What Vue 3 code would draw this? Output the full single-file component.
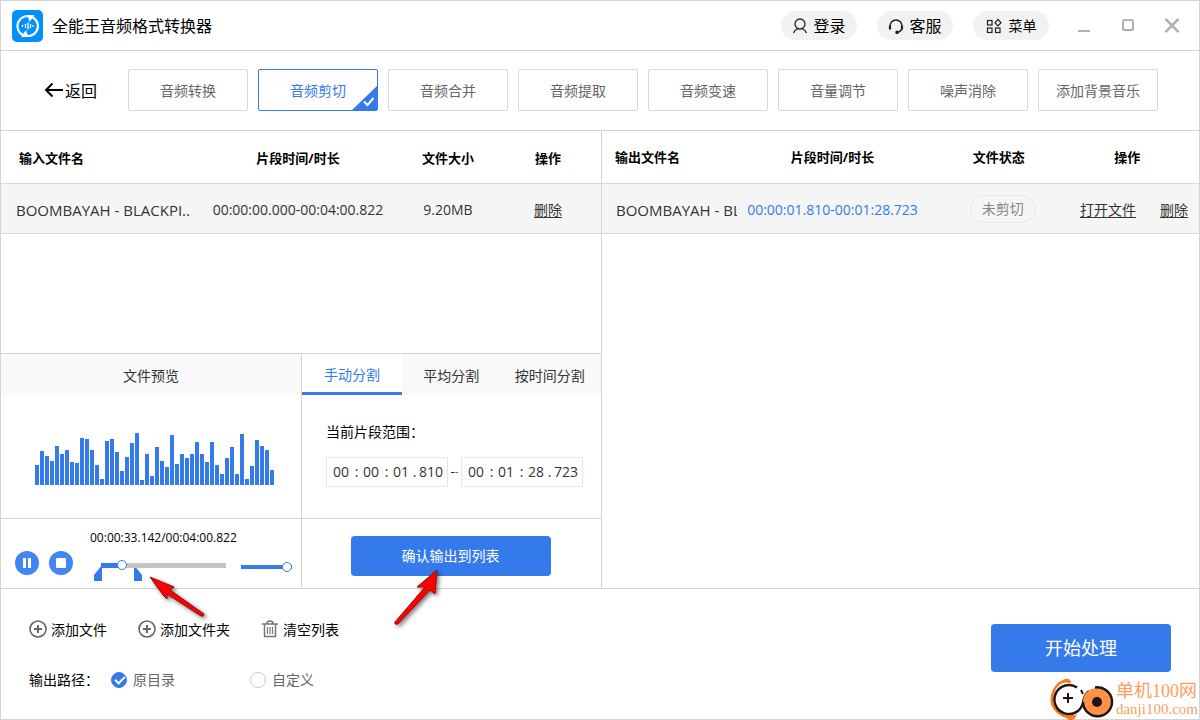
<script setup>
import { ref, computed } from 'vue'

const tools = ['音频转换', '音频剪切', '音频合并', '音频提取', '音频变速', '音量调节', '噪声消除', '添加背景音乐']
const activeTool = ref('音频剪切')

const splitModes = ['手动分割', '平均分割', '按时间分割']
const activeMode = ref('手动分割')

const inputs = [{ name: 'BOOMBAYAH - BLACKPI..', range: '00:00:00.000-00:04:00.822', size: '9.20MB' }]
const outputs = [{ name: 'BOOMBAYAH - BL', range: '00:00:01.810-00:01:28.723', state: '未剪切' }]

const bars = [
  20, 34, 29, 24, 39, 31, 35, 23, 22, 47, 46, 35, 20, 6, 44, 46, 33, 14, 28, 42, 52, 5, 31, 9,
  38, 24, 18, 50, 21, 31, 27, 31, 43, 31, 23, 43, 20, 11, 27, 38, 11, 51, 6, 19, 45, 39, 35, 15,
]

const position = ref(14)
const volume = ref(100)
const played = computed(() => ({ '--fill': position.value + '%' }))
const loudness = computed(() => ({ '--fill': volume.value + '%' }))

const units = ['时', '分', '秒', '毫秒']
const separators = [':', ':', '.']
const start = ref(['00', '00', '01', '810'])
const end = ref(['00', '01', '28', '723'])
const ranges = [
  { label: '开始', parts: start },
  { label: '结束', parts: end },
]

const target = ref('source')
</script>

<template>
  <div class="window">
    <header class="titlebar">
      <svg class="logo" viewBox="0 0 31 32" aria-hidden="true">
        <rect width="31" height="32" rx="5" fill="#0091ff" />
        <g fill="none" stroke="#fff" stroke-width="2.200">
          <path d="M11 25A10 10 0 0 1 8 9.500Q11 6 16 6" />
          <path d="M20.500 7.200A10 10 0 0 1 23.500 22.500Q20.500 26 15.500 26" />
        </g>
        <path d="M14 5L22.500 5L17.500 12L16.500 8.500Z" fill="#fff" />
        <path d="M17.500 27L9 27L14 20L15 23.500Z" fill="#fff" />
        <path d="M10.500 15v2M13.500 14v4M16 12.500v7M18.500 14v4M21 15v2" stroke="#fff" stroke-width="1.300" />
      </svg>
      <h1>全能王音频格式转换器</h1>
      <div class="account">
        <button class="pill" type="button">
          <svg width="16" height="16" viewBox="0 0 16 16" fill="none" stroke="#222" stroke-width="1.300">
            <circle cx="8" cy="6" r="5" />
            <path d="M1.500 15Q2.500 12 6 10.700M14.500 15Q13.500 12 10 10.700" />
          </svg>
          登录
        </button>
        <button class="pill" type="button">
          <svg width="16" height="16" viewBox="0 0 16 16" fill="none" stroke="#222" stroke-width="1.500">
            <path d="M2 10V8a6 6 0 0 1 12 0v2Q13.500 13.500 10 14.200" />
            <path d="M2 7.500v4M14 7.500v4" stroke-width="2.200" />
            <circle cx="9" cy="14.300" r="1" fill="#222" />
          </svg>
          客服
        </button>
        <button class="pill menu" type="button">
          <svg width="16" height="16" viewBox="0 0 16 16" fill="none" stroke="#222" stroke-width="1.200">
            <rect x="1.500" y="2.500" width="4.500" height="4.500" />
            <path d="M12 1.500L15 4.700L12 7.900L9 4.700Z" />
            <rect x="1.500" y="10" width="4.500" height="4.500" />
            <rect x="9.500" y="10" width="4.500" height="4.500" />
          </svg>
          菜单
        </button>
      </div>
      <div class="controls">
        <button type="button" aria-label="最小化">
          <svg width="16" height="16" viewBox="0 0 16 16"><path d="M2 13h12" stroke="#b2b2b2" stroke-width="2" /></svg>
        </button>
        <button type="button" aria-label="最大化">
          <svg width="16" height="16" viewBox="0 0 16 16"><rect x="3" y="2" width="10" height="10" rx="1" fill="none" stroke="#b2b2b2" stroke-width="2" /></svg>
        </button>
        <button type="button" aria-label="关闭">
          <svg width="16" height="16" viewBox="0 0 16 16"><path d="M1.500 1L14.500 14M14.500 1L1.500 14" stroke="#b2b2b2" stroke-width="2.500" /></svg>
        </button>
      </div>
    </header>

    <nav class="toolbar">
      <button class="back" type="button">
        <svg width="20" height="16" viewBox="0 0 20 16" fill="none" stroke="#000" stroke-width="2">
          <path d="M19 7H2M8.500 .5L2 7L8.500 13.500" />
        </svg>
        返回
      </button>
      <div class="tools">
        <button
          v-for="tool in tools"
          :key="tool"
          type="button"
          class="tool"
          :class="{ active: tool === activeTool }"
          @click="activeTool = tool"
        >
          {{ tool }}
          <svg v-if="tool === activeTool" class="corner" width="25" height="24" viewBox="0 0 25 24">
            <path d="M25 0V24H0Z" fill="#347aeb" />
            <path d="M12 15.500L15.500 19L21.500 12" fill="none" stroke="#fff" stroke-width="2" />
          </svg>
        </button>
      </div>
    </nav>

    <main class="workspace">
      <section class="source">
        <div class="list">
          <table class="input-table">
            <thead>
              <tr>
                <th class="name">输入文件名</th>
                <th class="time">片段时间/时长</th>
                <th class="size">文件大小</th>
                <th class="action">操作</th>
              </tr>
            </thead>
            <tbody>
              <tr v-for="file in inputs" :key="file.name">
                <td class="name">{{ file.name }}</td>
                <td>{{ file.range }}</td>
                <td>{{ file.size }}</td>
                <td class="action"><a href="#">删除</a></td>
              </tr>
            </tbody>
          </table>
        </div>

        <div class="editor">
          <div class="preview">
            <h2>文件预览</h2>
            <div class="wave">
              <span v-for="(bar, i) in bars" :key="i" :style="{ height: bar + 'px' }"></span>
            </div>
            <div class="player">
              <button class="round" type="button" aria-label="暂停">
                <svg width="24" height="24" viewBox="0 0 24 24">
                  <circle cx="12" cy="12" r="12" fill="#4285f4" />
                  <path d="M8 7h3v10H8zM13 7h3v10h-3z" fill="#fff" />
                </svg>
              </button>
              <button class="round" type="button" aria-label="停止">
                <svg width="24" height="24" viewBox="0 0 24 24">
                  <circle cx="12" cy="12" r="12" fill="#4285f4" />
                  <rect x="7" y="7" width="10" height="10" rx="1" fill="#fff" />
                </svg>
              </button>
              <div class="progress">
                <output>00:00:33.142/00:04:00.822</output>
                <div class="track">
                  <input v-model="position" class="seek" type="range" min="0" max="100" aria-label="播放进度" :style="played" />
                  <svg class="markers" width="49" height="16" viewBox="0 0 49 16" fill="#347aeb">
                    <path d="M8 0V16H0V10Z" />
                    <path d="M40 0L48 10V16H40Z" />
                  </svg>
                </div>
              </div>
              <input v-model="volume" class="volume" type="range" min="0" max="100" aria-label="音量" :style="loudness" />
            </div>
          </div>

          <div class="split">
            <div class="modes">
              <button
                v-for="mode in splitModes"
                :key="mode"
                type="button"
                :class="{ active: mode === activeMode }"
                @click="activeMode = mode"
              >{{ mode }}</button>
            </div>
            <div class="range">
              <p>当前片段范围：</p>
              <div class="fields">
                <template v-for="(range, r) in ranges" :key="range.label">
                  <span v-if="r" class="dash">-<i>-</i></span>
                  <div class="stamp">
                    <template v-for="(unit, i) in units" :key="unit">
                      <input v-model="range.parts.value[i]" type="text" :class="{ ms: i === 3 }" :aria-label="range.label + unit" />
                      <span v-if="i < 3" :class="{ dot: i === 2 }">{{ separators[i] }}</span>
                    </template>
                  </div>
                </template>
              </div>
            </div>
            <div class="confirm">
              <button class="primary" type="button">确认输出到列表</button>
            </div>
          </div>

          <svg class="pointers" width="300" height="70" viewBox="0 0 300 70" aria-hidden="true">
            <g fill="#f00" stroke="#8a1010" stroke-width="1">
              <path d="M5 13L29 23L25 26L59 50Q59 53 56 52L22 30L22 35L18 31Z" />
              <path d="M292 6L290 30L285 26L253 60Q249 61 250 58L280 23L272 23Z" />
            </g>
          </svg>
        </div>
      </section>

      <section class="result">
        <table class="output-table">
          <thead>
            <tr>
              <th class="name">输出文件名</th>
              <th class="time">片段时间/时长</th>
              <th class="state">文件状态</th>
              <th class="actions">操作</th>
            </tr>
          </thead>
          <tbody>
            <tr v-for="file in outputs" :key="file.name">
              <td class="name">{{ file.name }}</td>
              <td class="clip">{{ file.range }}</td>
              <td class="status"><span class="badge">{{ file.state }}</span></td>
              <td><div class="links"><a href="#">打开文件</a><a href="#">删除</a></div></td>
            </tr>
          </tbody>
        </table>
      </section>
    </main>

    <footer class="bottom">
      <div class="options">
        <div class="adders">
          <button type="button">
            <svg width="20" height="20" viewBox="0 0 20 20" fill="none" stroke="#666">
              <circle cx="10" cy="9" r="8" stroke-width="1.600" />
              <path d="M10 5v8M6 9h8" stroke-width="2" />
            </svg>
            添加文件
          </button>
          <button type="button">
            <svg width="20" height="20" viewBox="0 0 20 20" fill="none" stroke="#666">
              <circle cx="10" cy="9" r="8" stroke-width="1.600" />
              <path d="M10 5v8M6 9h8" stroke-width="2" />
            </svg>
            添加文件夹
          </button>
          <button type="button">
            <svg width="20" height="20" viewBox="0 0 20 20" fill="none" stroke="#777" stroke-width="1.500">
              <path d="M2 4h16M7 3.500Q7 1 10 1Q13 1 13 3.500M4.500 4v12.500h11V4" />
              <path d="M7.500 7v7M10 7v7M12.500 7v7" stroke-width="1.200" />
            </svg>
            清空列表
          </button>
        </div>
        <div class="paths" role="radiogroup" aria-label="输出路径">
          <span class="caption">输出路径：</span>
          <label><input v-model="target" type="radio" name="target" value="source" />原目录</label>
          <label><input v-model="target" type="radio" name="target" value="custom" />自定义</label>
        </div>
      </div>
      <button class="primary start" type="button">开始处理</button>
    </footer>

    <div class="site">
      <svg width="64" height="42" viewBox="0 0 64 42" fill="none">
        <path d="M20 4Q10 1 4 12Q-2 26 8 34Q14 40 24 38" stroke="#ff7519" stroke-width="2.500" />
        <path d="M12 3Q16-1 20 2L22 5Q17 3 12 3ZM15 39Q22 39 27 36Q25 43 19 42Z" fill="#ff7519" />
        <path d="M27 9.500A14.500 14.500 0 1 0 33 25Q34 17 39 13" stroke="#201512" stroke-width="2.500" />
        <path d="M13 20h10M18 15v10M31 12L33 16" stroke="#201512" stroke-width="2" />
        <circle cx="47" cy="24" r="14" fill="#ff9147" />
        <path d="M45 9.500A14.500 14.500 0 1 1 33 24" stroke="#201512" stroke-width="2.500" />
        <circle cx="47" cy="24" r="5" fill="#201512" />
      </svg>
      <div class="site-name"><span>单机100网</span><small>danji100.com</small></div>
    </div>
  </div>
</template>

<style>
body {
  margin: 0;
}
</style>

<style scoped>
* {
  box-sizing: border-box;
}
.window {
  position: relative;
  display: flex;
  flex-direction: column;
  min-height: 100vh;
  border: 1px solid #d4d4d4;
  background: #fff;
  color: #000;
  font: 14px/20px "Open Sans", "Noto Sans CJK SC", sans-serif;
}
button,
input {
  margin: 0;
  padding: 0;
  border: 0;
  background: none;
  color: inherit;
  font: inherit;
}
button {
  cursor: pointer;
}
svg {
  display: block;
  flex: none;
}
h1,
h2,
p {
  margin: 0;
  font-weight: 400;
}
.titlebar {
  display: flex;
  align-items: center;
  height: 50px;
  padding: 0 19px 0 11px;
  border-bottom: 1px solid #d4d4d4;
}
.logo {
  width: 31px;
  height: 32px;
}
h1 {
  margin-left: 9px;
  font-size: 16px;
}
.account {
  display: flex;
  gap: 20px;
  margin-left: auto;
}
.pill {
  display: flex;
  align-items: center;
  justify-content: center;
  gap: 5px;
  width: 76px;
  height: 29px;
  border-radius: 15px;
  background: #f2f2f2;
  font-size: 16px;
}
.pill.menu {
  gap: 7px;
  font-size: 14px;
}
.controls {
  display: flex;
  gap: 28px;
  margin-left: 27px;
}
.toolbar {
  display: flex;
  align-items: center;
  height: 80px;
  padding: 0 41px 2px 43px;
  border-bottom: 1px solid #d4d4d4;
}
.back {
  display: flex;
  align-items: center;
  gap: 1px;
  width: 84px;
  padding-top: 3px;
  font-size: 16px;
}
.tools {
  display: flex;
  flex: 1;
  gap: 10px;
}
.tool {
  position: relative;
  flex: 1;
  height: 42px;
  padding-top: 2px;
  border: 1px solid #d9d9d9;
  border-radius: 2px;
  color: #666;
}
.tool.active {
  border-color: #347aeb;
  color: #347aeb;
}
.corner {
  position: absolute;
  right: 0;
  bottom: 0;
}
.workspace {
  display: grid;
  flex: 1;
  grid-template-columns: minmax(0, 601fr) minmax(0, 597fr);
  border-bottom: 1px solid #d4d4d4;
}
.source {
  display: flex;
  flex-direction: column;
  border-right: 1px solid #d4d4d4;
}
.list {
  flex: 1;
}
table {
  width: 100%;
  border-collapse: separate;
  border-spacing: 0;
  table-layout: fixed;
}
th,
td {
  padding: 0;
  border-bottom: 1px solid #d9d9d9;
  text-align: center;
  white-space: nowrap;
}
th {
  height: 53px;
  font-size: 13px;
  font-weight: 700;
}
.input-table th {
  padding-top: 2px;
}
td {
  height: 50px;
  padding-top: 3px;
  background: #f5f5f5;
  color: #333;
}
td.status {
  padding-top: 0;
}
th.name {
  padding-left: 18px;
  text-align: left;
}
td.name {
  padding-left: 15px;
  overflow: hidden;
  font-size: 15px;
  text-align: left;
}
.input-table .name {
  width: 33%;
}
.input-table .time {
  width: 33%;
}
.input-table .size {
  width: 17%;
}
.input-table .action {
  padding-right: 4px;
}
.output-table .name {
  width: 135px;
}
.output-table th.name {
  padding-left: 13px;
}
.output-table td.name {
  padding-left: 14px;
}
.output-table .time {
  width: 32%;
}
.output-table .state {
  width: 25%;
  padding-right: 8px;
}
.output-table .actions {
  padding-right: 22px;
}
td a {
  color: #333;
  text-underline-offset: 2px;
}
td.clip {
  color: #347aeb;
}
.badge {
  display: inline-block;
  width: 66px;
  border: 1px solid #e8e8e8;
  border-radius: 14px;
  color: #888;
  line-height: 26px;
}
.links {
  display: flex;
  justify-content: flex-end;
  gap: 24px;
  padding-right: 11px;
}
.editor {
  position: relative;
  display: grid;
  grid-template-columns: minmax(0, 301fr) minmax(0, 299fr);
  border-top: 1px solid #d4d4d4;
}
.preview,
.split {
  display: grid;
  grid-template-rows: 41px 124px 69px;
  grid-template-columns: minmax(0, 1fr);
}
.preview {
  border-right: 1px solid #d4d4d4;
}
h2 {
  background: #f9f9f9;
  color: #333;
  font-size: 14px;
  line-height: 43px;
  text-align: center;
}
.wave {
  display: flex;
  align-items: flex-end;
  gap: 1px;
  padding: 0 0 33px 34px;
  border-bottom: 1px solid #d4d4d4;
}
.wave span {
  width: 4px;
  background: #347aeb;
}
.player {
  display: flex;
  align-items: flex-start;
  padding: 0 9px 0 14px;
}
.round {
  flex: none;
  margin: 32px 10px 0 0;
}
.progress {
  flex: 1;
  min-width: 0;
  margin: 9px 15px 0 7px;
}
output {
  display: block;
  font-size: 12px;
  white-space: nowrap;
}
.track {
  position: relative;
  height: 30px;
  margin-left: 11px;
  padding-top: 11px;
}
.markers {
  position: absolute;
  top: 17px;
  left: -7px;
}
input[type="range"] {
  position: relative;
  z-index: 1;
  display: block;
  width: 100%;
  height: 12px;
  appearance: none;
}
input[type="range"]::-webkit-slider-runnable-track {
  height: 4px;
  background: linear-gradient(#347aeb, #347aeb) 0 0 / var(--fill) 100% no-repeat #c4c4c4;
}
input.seek::-webkit-slider-runnable-track {
  height: 5px;
}
input[type="range"]::-webkit-slider-thumb {
  width: 10px;
  height: 10px;
  margin-top: -3px;
  border: 1px solid #347aeb;
  border-radius: 50%;
  background: #fff;
  appearance: none;
}
input.volume {
  flex: none;
  width: 51px;
  margin-top: 42px;
}
.modes {
  display: grid;
  grid-template-columns: 100px 1fr 1fr;
  padding-right: 2px;
  background: #f9f9f9;
}
.modes button {
  padding-top: 3px;
  color: #333;
  white-space: nowrap;
}
.modes button.active {
  border-bottom: 3px solid #347aeb;
  background: #fff;
  color: #347aeb;
}
.range {
  padding: 27px 18px 0 24px;
  border-bottom: 1px solid #d4d4d4;
}
.fields {
  display: flex;
  align-items: center;
  margin-top: 15px;
}
.stamp {
  display: flex;
  flex: none;
  align-items: center;
  width: 122px;
  height: 30px;
  padding-left: 6px;
  border: 1px solid #e6e6e6;
  color: #333;
}
.stamp input {
  width: 17px;
}
.stamp input.ms {
  width: 26px;
}
.stamp span {
  width: 13px;
  text-align: center;
}
.stamp span.dot {
  width: 9px;
}
.dash {
  width: 13px;
  font-size: 12px;
  text-align: center;
}
.dash i {
  color: #347aeb;
  font-style: normal;
}
.confirm {
  display: flex;
  justify-content: center;
  padding: 17px 2px 0 0;
}
.primary {
  width: 200px;
  height: 40px;
  border-radius: 4px;
  background: #347aeb;
  color: #fff;
}
.pointers {
  position: absolute;
  z-index: 2;
  bottom: -46px;
  left: 144px;
  filter: drop-shadow(2px 2px 2px #0008);
  pointer-events: none;
}
.bottom {
  display: flex;
  justify-content: space-between;
  height: 130px;
  padding: 31px 28px 0 27px;
}
.adders,
.paths {
  display: flex;
}
.adders button {
  display: flex;
  align-items: center;
  gap: 3px;
  margin-right: 30px;
}
.paths {
  align-items: center;
  margin-top: 30px;
}
.caption {
  width: 83px;
  padding-left: 1px;
}
.paths label {
  display: flex;
  align-items: center;
  gap: 6px;
  width: 139px;
  color: #666;
}
.paths input {
  width: 16px;
  height: 16px;
  border: 1px solid #ccc;
  border-radius: 50%;
  appearance: none;
}
.paths input:checked {
  position: relative;
  border-color: #347aeb;
  background: #347aeb;
}
.paths input:checked::after {
  position: absolute;
  top: 3px;
  left: 3px;
  width: 8px;
  height: 4px;
  border: solid #fff;
  border-width: 0 0 2px 2px;
  content: "";
  transform: rotate(-45deg);
}
.primary.start {
  width: 180px;
  height: 48px;
  margin-top: 4px;
  font-size: 18px;
}
.site {
  position: absolute;
  right: 1px;
  bottom: -1px;
  display: flex;
  align-items: center;
  gap: 2px;
  color: #ff9c60;
  font-family: "Liberation Serif", "Noto Sans CJK SC", serif;
}
.site-name span,
.site-name small {
  display: block;
  font-size: 18px;
  line-height: 20px;
}
.site-name small {
  font-size: 15px;
  line-height: 17px;
}
</style>
